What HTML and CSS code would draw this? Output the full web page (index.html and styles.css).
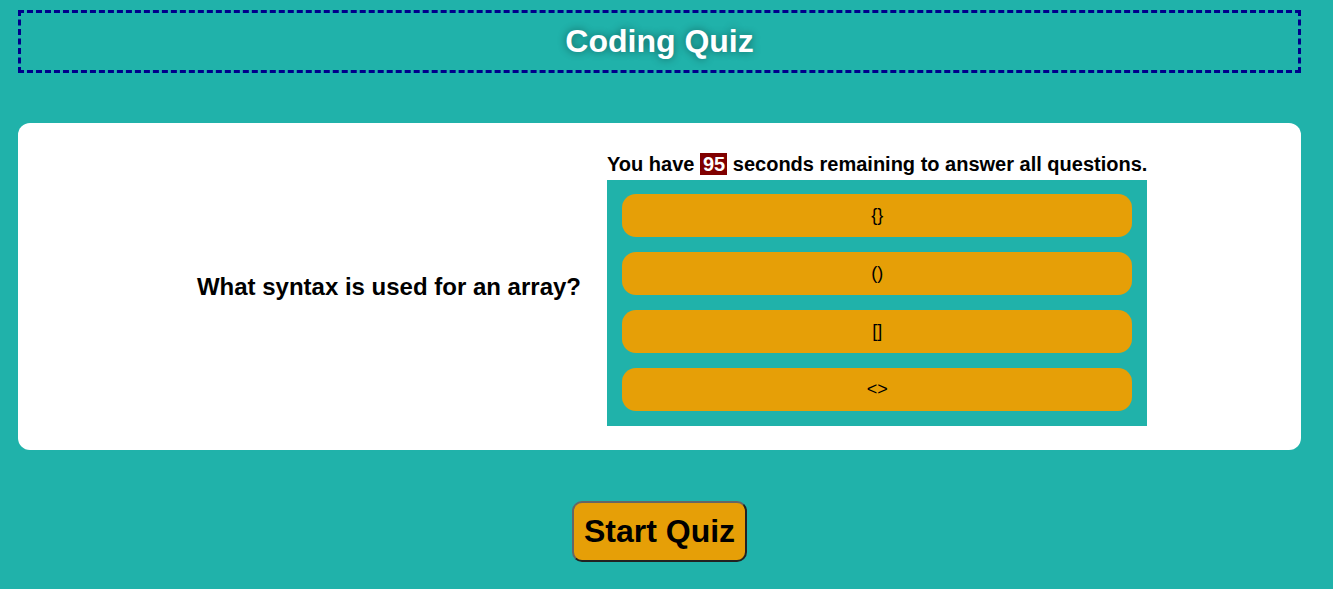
FILE: index.html
```html
<!DOCTYPE html>
<html lang="en">
<head>
<meta charset="utf-8">
<title>Coding Quiz</title>
<link rel="stylesheet" href="styles.css">
</head>
<body>
<header class="header">
  <h1 class="title">Coding Quiz</h1>
</header>
<main class="card">
  <div class="question-col">
    <h2 class="question">What syntax is used for an array?</h2>
  </div>
  <div class="answer-col">
    <p class="timer">You have <span class="seconds">95</span> seconds remaining to answer all questions.</p>
    <div class="answers">
      <button class="answer">{}</button>
      <button class="answer">()</button>
      <button class="answer">[]</button>
      <button class="answer">&lt;&gt;</button>
    </div>
  </div>
</main>
<div class="start-row">
  <button class="start">Start Quiz</button>
</div>
</body>
</html>
```
FILE: styles.css
```css
html, body {
  margin: 0;
  padding: 0;
}
body {
  background: #20b2aa;
  font-family: "Liberation Sans", Arial, sans-serif;
  padding: 10px 32px 0 18px;
}
.header {
  border: 3px dashed #00008b;
  height: 57px;
  display: flex;
  align-items: center;
  justify-content: center;
}
.title {
  margin: 0;
  color: #fff;
  font-size: 32px;
  font-weight: bold;
  text-shadow: 0 0 8px rgba(0, 0, 0, 0.45);
}
.card {
  margin-top: 50px;
  background: #fff;
  border-radius: 12px;
  height: 327px;
  box-sizing: border-box;
  display: flex;
  align-items: center;
}
.question-col {
  flex: 0 0 563px;
  text-align: right;
}
.question {
  margin: 0;
  font-size: 24px;
  font-weight: bold;
  color: #000;
}
.answer-col {
  margin-left: 26px;
  margin-top: 5px;
}
.timer {
  margin: 0 0 4px;
  font-size: 20px;
  font-weight: bold;
  line-height: 24px;
  white-space: nowrap;
}
.seconds {
  background: #800000;
  color: #fff;
  padding: 0 2px 0 3px;
}
.answers {
  background: #20b2aa;
  padding: 14px 15px 15px;
  display: flex;
  flex-direction: column;
  gap: 15px;
}
.answer {
  height: 43px;
  border: none;
  border-radius: 14px;
  background: #e69f07;
  font-family: "Liberation Sans", Arial, sans-serif;
  font-size: 18px;
  color: #000;
  padding: 0;
}
.start-row {
  display: flex;
  justify-content: center;
  margin-top: 51px;
}
.start {
  width: 175px;
  height: 61px;
  background: #e69f07;
  border: 2px solid;
  border-color: #666 #222 #222 #666;
  border-radius: 10px;
  font-family: "Liberation Sans", Arial, sans-serif;
  font-size: 32px;
  font-weight: bold;
  color: #000;
  padding: 0;
}
```
